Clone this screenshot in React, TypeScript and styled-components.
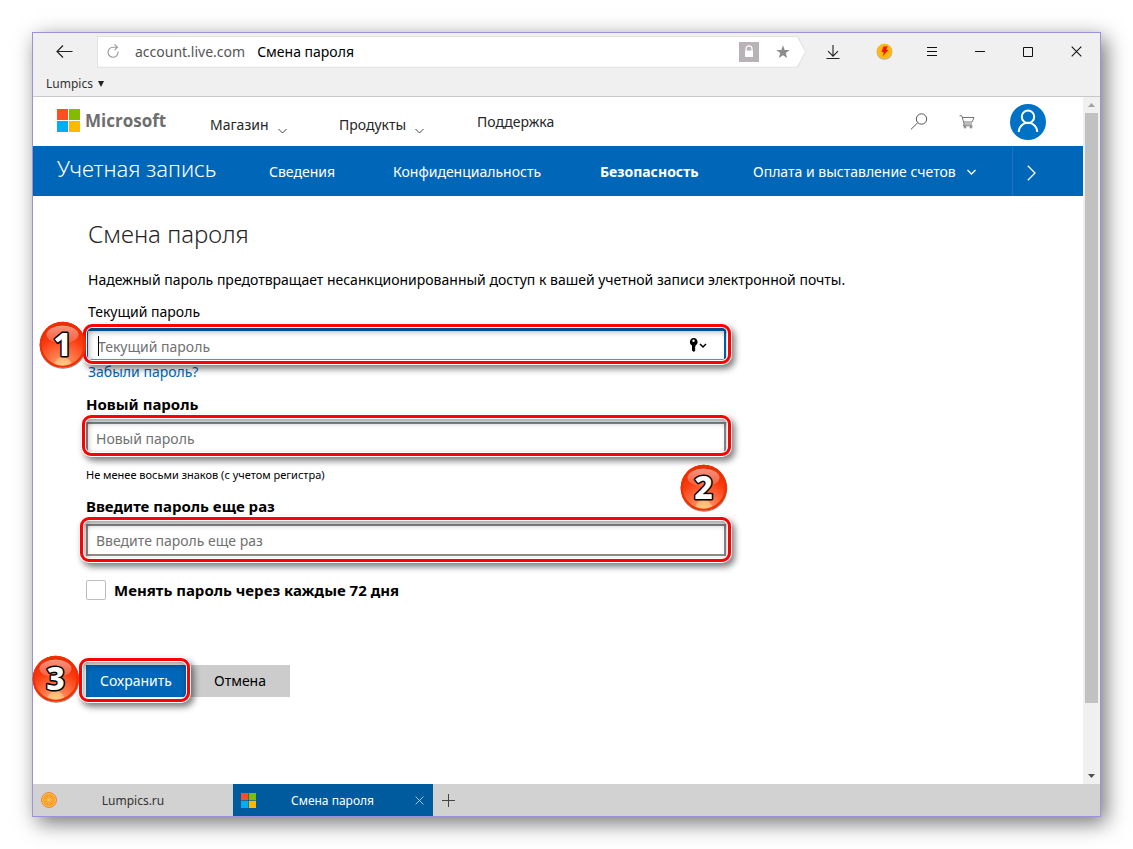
import React from "react";
import styled, { createGlobalStyle, css } from "styled-components";

const GlobalStyle = createGlobalStyle`
  *, *::before, *::after { box-sizing: border-box; }
  body {
    margin: 0;
    background: #fff;
    color: #000;
    font-family: "Noto Sans", "Open Sans", sans-serif;
    font-size: 14px;
    line-height: 24px;
  }
  button, input { font: inherit; color: inherit; margin: 0; }
  a { color: inherit; text-decoration: none; }
  h1, p { margin: 0; }
  svg { display: block; flex: none; }
`;

const BrowserWindow = styled.div`
  margin: 32px;
  min-height: calc(100vh - 64px);
  display: flex;
  flex-direction: column;
  border: 1px solid #9a93dc;
  background: #fff;
  box-shadow: 5px 6px 20px rgba(0, 0, 0, 0.55);
`;

/* ---------- browser chrome ---------- */

const Chrome = styled.header`
  height: 64px;
  display: flex;
  flex-direction: column;
  background: #f0f0f0;
  border-bottom: 1px solid #c8c8c8;
`;

const AddressRow = styled.div`
  display: flex;
  align-items: center;
  height: 38px;
`;

const ChromeButton = styled.button<{ $width?: number }>`
  width: ${(p) => p.$width ?? 48}px;
  height: 32px;
  padding: 0;
  border: 0;
  background: none;
  display: flex;
  align-items: center;
  justify-content: center;
`;

const arrowEnd = css`
  clip-path: polygon(0 0, calc(100% - 8px) 0, 100% 50%, calc(100% - 8px) 100%, 0 100%);
`;

const AddressFrame = styled.div`
  ${arrowEnd}
  flex: 1;
  height: 32px;
  padding: 1px;
  background: #e2e2e2;
`;

const AddressBar = styled.div`
  ${arrowEnd}
  height: 30px;
  padding: 0 14px 0 7px;
  display: flex;
  align-items: center;
  background: #fff;
`;

const AddressText = styled.div`
  flex: 1;
  display: flex;
  gap: 12px;
  padding-left: 14px;
  color: #000;
`;

const Host = styled.span`
  color: #555;
`;

const IconButton = styled.button<{ $size?: number; $fill?: string }>`
  width: ${(p) => p.$size ?? 16}px;
  height: ${(p) => p.$size ?? 16}px;
  padding: 0;
  border: 0;
  background: ${(p) => p.$fill ?? "none"};
  display: flex;
  align-items: center;
  justify-content: center;
`;

const AddressActions = styled.div`
  display: flex;
  align-items: center;
  gap: 16px;
`;

const BookmarkButton = styled.button`
  align-self: flex-start;
  display: flex;
  align-items: center;
  gap: 5px;
  height: 26px;
  padding: 1px 13px 0;
  border: 0;
  background: none;
  color: #333;
  font-size: 12px;
`;

/* ---------- page viewport ---------- */

const Viewport = styled.div`
  flex: 1;
  display: flex;
`;

const Page = styled.div`
  flex: 1;
  min-width: 0;
`;

const ScrollTrack = styled.div`
  width: 17px;
  padding: 0 2px;
  display: flex;
  flex-direction: column;
  align-items: center;
  background: #f0f0f0;
`;

const ScrollArrow = styled.div`
  height: 16px;
  display: flex;
  align-items: center;
`;

const ScrollThumb = styled.div`
  flex: 9;
  width: 13px;
  background: #c1c1c1;
`;

const ScrollRest = styled.div`
  flex: 1;
`;

const SiteHeader = styled.header`
  height: 49px;
  display: flex;
  align-items: center;
  padding: 0 37px 0 24px;
`;

const Brand = styled.a`
  display: flex;
  align-items: center;
  gap: 5px;
  width: 153px;
  padding-bottom: 2px;
  color: #6e6e6e;
  font-family: "Open Sans", sans-serif;
  font-size: 17px;
  font-weight: 700;
`;

const MenuButton = styled.button<{ $width: number }>`
  display: flex;
  align-items: flex-end;
  gap: 9px;
  width: ${(p) => p.$width}px;
  padding: 6px 0 0;
  border: 0;
  background: none;
  color: #262626;
`;

const Chevron = styled.span`
  padding-bottom: 3px;
`;

const HeaderLink = styled.a`
  color: #262626;
`;

const HeaderTools = styled.div`
  margin-left: auto;
  display: flex;
  align-items: center;
  gap: 32px;
`;

const ToolGroup = styled.div`
  display: flex;
  gap: 32px;
  padding-right: 3px;
`;

const Avatar = styled.button`
  width: 36px;
  height: 36px;
  padding: 0;
  border: 0;
  border-radius: 50%;
  background: #0072c6;
`;

const AccountNav = styled.nav`
  height: 50px;
  display: flex;
  align-items: center;
  padding-left: 24px;
  background: #0067b8;
  color: #fff;
`;

const AccountTitle = styled.a`
  width: 212px;
  padding-bottom: 6px;
  font-size: 22px;
  font-weight: 300;
`;

const NavLink = styled.a<{ $width: number; $active?: boolean }>`
  width: ${(p) => p.$width}px;
  padding-top: 2px;
  font-weight: ${(p) => (p.$active ? 700 : 400)};
  display: flex;
  align-items: center;
  gap: 11px;
  white-space: nowrap;
`;

const NavNext = styled.button`
  width: 71px;
  height: 50px;
  margin-left: auto;
  padding: 4px 0 0 14px;
  border: 0;
  border-left: 1px solid #2a6ebb;
  background: none;
`;

/* ---------- form ---------- */

const Form = styled.form`
  padding: 20px 53px 24px;
  display: flex;
  flex-direction: column;
  align-items: flex-start;
`;

const Title = styled.h1`
  padding-left: 2px;
  color: #262626;
  font-size: 24px;
  font-weight: 300;
  line-height: 36px;
`;

const Lead = styled.p`
  padding: 16px 2px 8px;
`;

const Label = styled.label<{ $strong?: boolean }>`
  padding-left: ${(p) => (p.$strong ? 0 : 2)}px;
  font-size: ${(p) => (p.$strong ? 15 : 14)}px;
  font-weight: ${(p) => (p.$strong ? 700 : 400)};
  margin-bottom: ${(p) => (p.$strong ? 6 : 4)}px;
`;

const Field = styled.div`
  position: relative;
  width: 100%;
  max-width: 640px;
`;

const PasswordInput = styled.input<{ $current?: boolean }>`
  display: block;
  width: 100%;
  height: 32px;
  padding: ${(p) => (p.$current ? "2px 10px 0" : "0 8px")};
  border: 2px solid ${(p) => (p.$current ? "#0067b8" : "#8c8c8c")};
  border-top-width: ${(p) => (p.$current ? 3 : 2)}px;
  background: #fff;
  outline: none;
  ${(p) => p.$current && css`border-bottom: 1px solid #5a9ad0;`}
  &::placeholder { color: #717171; opacity: 1; }
`;

const Caret = styled.span`
  position: absolute;
  left: 12px;
  top: 8px;
  width: 1px;
  height: 20px;
  background: #000;
`;

const KeyMenu = styled.button`
  position: absolute;
  right: 19px;
  top: 8px;
  display: flex;
  align-items: center;
  height: 18px;
  padding: 0;
  border: 0;
  background: none;
`;

const ForgotLink = styled.a`
  padding-left: 2px;
  margin-bottom: 8px;
  color: #0067b8;
`;

const Hint = styled.p`
  padding: 11px 0 9px;
  font-size: 11px;
  line-height: 20px;
`;

const CheckRow = styled.label`
  display: flex;
  align-items: center;
  gap: 8px;
  margin: 22px 0 63px;
  font-size: 15px;
  font-weight: 700;
`;

const Checkbox = styled.input`
  appearance: none;
  width: 20px;
  height: 20px;
  border: 1px solid #bdbdbd;
  border-radius: 2px;
  background: #fff;
`;

const Actions = styled.div`
  display: flex;
  gap: 4px;
`;

const ActionSlot = styled.div`
  position: relative;
`;

const ActionButton = styled.button<{ $primary?: boolean }>`
  width: 100px;
  height: 32px;
  padding: 0;
  border: 0;
  background: ${(p) => (p.$primary ? "#0067b8" : "#cccccc")};
  color: ${(p) => (p.$primary ? "#fff" : "#000")};
`;

/* ---------- annotations over the page ---------- */

const Highlight = styled.span<{ $outset: string }>`
  position: absolute;
  inset: ${(p) => p.$outset};
  border: 3px solid #ff0000;
  border-radius: 9px;
  pointer-events: none;
  box-shadow:
    0 0 0 1px #fff,
    3px 4px 6px 1px rgba(0, 0, 0, 0.5),
    inset 0 0 0 1px #fff,
    inset 1px 3px 6px 1px rgba(0, 0, 0, 0.4);
`;

const BadgeSpot = styled.span<{ $left?: number; $right?: number; $top: number }>`
  position: absolute;
  z-index: 1;
  top: ${(p) => p.$top}px;
  ${(p) => p.$left !== undefined && css`left: ${p.$left}px;`}
  ${(p) => p.$right !== undefined && css`right: ${p.$right}px;`}
`;

/* ---------- tab strip ---------- */

const TabStrip = styled.nav`
  height: 32px;
  display: flex;
  background: #d2d2d2;
`;

const Tab = styled.div<{ $active?: boolean }>`
  width: 200px;
  padding: 0 10px 0 8px;
  display: flex;
  align-items: center;
  font-size: 12px;
  background: ${(p) => (p.$active ? "#005a9e" : "transparent")};
  color: ${(p) => (p.$active ? "#fff" : "#333")};
`;

const TabTitle = styled.a`
  flex: 1;
  padding: 2px 6px 0 0;
  text-align: center;
`;

const TabSpacer = styled.span`
  width: 8px;
`;

/* ---------- icons ---------- */

const MicrosoftMark = ({ size }: { size: number }) => (
  <svg width={size} height={size} viewBox="0 0 23 23">
    <path fill="#ff4f22" d="M0 0h11v11H0z" />
    <path fill="#82bb00" d="M12 0h11v11H12z" />
    <path fill="#00aef2" d="M0 12h11v11H0z" />
    <path fill="#ffb800" d="M12 12h11v11H12z" />
  </svg>
);

const ChevronDown = ({ color, width = 1 }: { color: string; width?: number }) => (
  <svg width="9" height="6" viewBox="0 0 9 6" fill="none" stroke={color} strokeWidth={width}>
    <path d="M.5 1l4 4 4-4" />
  </svg>
);

const Badge = ({ value }: { value: number }) => {
  const id = `ball${value}`;
  return (
    <svg width="48" height="48" viewBox="0 0 48 48" role="img" aria-label={String(value)}>
      <defs>
        <radialGradient id={id} cx=".5" cy=".96" r=".9">
          <stop offset="0" stopColor="#ffcf85" />
          <stop offset=".2" stopColor="#ffb377" />
          <stop offset=".22" stopColor="#ff8656" />
          <stop offset=".48" stopColor="#ff5e30" />
          <stop offset=".7" stopColor="#fb3a10" />
          <stop offset="1" stopColor="#e92a00" />
        </radialGradient>
        <linearGradient id={`${id}g`} x1="0" y1="0" x2="0" y2="1">
          <stop offset="0" stopColor="#fff" stopOpacity=".5" />
          <stop offset="1" stopColor="#fff" stopOpacity=".15" />
        </linearGradient>
      </defs>
      <circle cx="24" cy="24.5" r="23.3" fill="#7d5148" opacity=".75" />
      <circle cx="23.7" cy="23.7" r="23" fill={`url(#${id})`} />
      <circle cx="23.7" cy="23.7" r="22" fill="none" stroke="#f03000" strokeWidth="2" />
      <ellipse cx="23.5" cy="13.5" rx="16" ry="9" fill={`url(#${id}g)`} />
      <text
        x="23.5"
        y="35"
        textAnchor="middle"
        fontFamily="Noto Sans, Open Sans, sans-serif"
        fontWeight="800"
        fontSize="32"
        fill="#fff"
        stroke="#000"
        strokeWidth="3"
        strokeLinejoin="round"
        paintOrder="stroke"
      >
        {value}
      </text>
    </svg>
  );
};

const BackIcon = () => (
  <svg width="18" height="14" viewBox="0 0 18 14" fill="none" stroke="#222" strokeWidth="1.2">
    <path d="M16.500 6.500H1M7 .5l-6 6 6 6" />
  </svg>
);

const ReloadIcon = () => (
  <svg width="13" height="15" viewBox="0 0 13 15" fill="none" stroke="#999" strokeWidth="1.1">
    <path d="M11 7.500a5 5 0 1 1-5-4.300H10.500M7.500.3l3 2.900-3 2.900" />
  </svg>
);

const LockIcon = () => (
  <svg width="10" height="13" viewBox="0 0 10 13">
    <path d="M2 6V3.800a3 3 0 0 1 6 0V6" fill="none" stroke="#fff" strokeWidth="1.2" />
    <path d="M1 5.500h8V12H1z" fill="#fff" />
  </svg>
);

const StarIcon = () => (
  <svg width="14" height="14" viewBox="0 0 14 14">
    <path fill="#8d8d8d" d="M7 .3l1.700 4.600 5 .2-3.900 3 1.400 4.900L7 10.200l-4.200 2.800 1.400-4.900L.3 5.100l5-.2z" />
  </svg>
);

const DownloadIcon = () => (
  <svg width="14" height="16" viewBox="0 0 14 16" fill="none" stroke="#222" strokeWidth="1.1">
    <path d="M7 1v11M2 7.200l5 5 5-5M.5 14.500h13" />
  </svg>
);

const BoltIcon = () => (
  <svg width="17" height="17" viewBox="0 0 17 17">
    <circle cx="8.500" cy="8.800" r="8" fill="#b9b0a0" />
    <circle cx="8.500" cy="8.200" r="7.500" fill="#ffbb0c" />
    <path fill="#f5160a" d="M7.500 3.500l4.300-.3-1.600 3.600 2.200.2-5.800 6.600 1.200-4.400-2.400-.2z" />
  </svg>
);

const MenuIcon = () => (
  <svg width="10" height="10" viewBox="0 0 10 10" stroke="#111">
    <path d="M0 .5h10M0 4.500h10M0 8.500h10" />
  </svg>
);

const MinimizeIcon = () => (
  <svg width="10" height="10" viewBox="0 0 10 10" stroke="#111">
    <path d="M0 4.500h10" />
  </svg>
);

const MaximizeIcon = () => (
  <svg width="10" height="10" viewBox="0 0 10 10" fill="none" stroke="#111">
    <path d="M.5.5h9v9h-9z" />
  </svg>
);

const CloseIcon = ({ color = "#111", size = 11 }: { color?: string; size?: number }) => (
  <svg width={size} height={size} viewBox="0 0 11 11" stroke={color} strokeWidth="1.100">
    <path d="M.7.7l9.600 9.600M10.300.7L.7 10.300" />
  </svg>
);

const SearchIcon = () => (
  <svg width="18" height="17" viewBox="0 0 18 17" fill="none" stroke="#555">
    <circle cx="11.500" cy="6" r="5.200" />
    <path d="M7.800 9.700L1 16.300" />
  </svg>
);

const CartIcon = () => (
  <svg width="16" height="14" viewBox="0 0 16 14" fill="none" stroke="#666" strokeWidth=".9">
    <path d="M.5.800h2.300l2.400 8.200h7.800M3.300 2.500h11.700l-1.900 4.500H4.800M5.200 9l-.8 1.800h9" />
    <circle cx="6" cy="12.200" r=".9" />
    <circle cx="12" cy="12.200" r=".9" />
  </svg>
);

const PersonIcon = () => (
  <svg width="36" height="36" viewBox="0 0 36 36" fill="none" stroke="#fff" strokeWidth="2">
    <circle cx="18" cy="12.800" r="6.200" />
    <path d="M8.700 28a9.300 9.300 0 0 1 18.600 0" />
  </svg>
);

const NextIcon = () => (
  <svg width="9" height="16" viewBox="0 0 9 16" fill="none" stroke="#fff" strokeWidth="1.300">
    <path d="M.8.800L8 8 .8 15.200" />
  </svg>
);

const KeyIcon = () => (
  <svg width="18" height="14" viewBox="0 0 18 14">
    <path
      fill="#000"
      fillRule="evenodd"
      d="M4.500 0a4 4 0 0 1 2 7.500v1l-.8.800.8.900-.8 1 .8.900-1.500 1.900-2-1.500v-5A4 4 0 0 1 4.500 0zm0 1.500a1.200 1.200 0 1 0 0 2.400 1.200 1.200 0 0 0 0-2.400z"
    />
    <path d="M11 6l3 3 3-3" fill="none" stroke="#000" strokeWidth="1.500" />
  </svg>
);

const OrangeIcon = () => (
  <svg width="16" height="16" viewBox="0 0 16 16">
    <circle cx="8" cy="8" r="7.500" fill="#ffc04a" stroke="#ee7a3a" strokeWidth=".9" />
    <circle cx="8" cy="8" r="6" fill="#f79c1c" />
    <path
      stroke="#fbc468"
      strokeWidth=".8"
      d="M8 2.500v11M2.500 8h11M4.100 4.100l7.800 7.800M11.900 4.100l-7.800 7.800"
    />
  </svg>
);

const TriangleIcon = ({ color, up }: { color: string; up?: boolean }) => (
  <svg width="7" height="4" viewBox="0 0 7 4">
    <path fill={color} d={up ? "M0 4h7L3.500 0z" : "M0 0h7L3.500 4z"} />
  </svg>
);

const BookmarkArrow = () => (
  <svg width="6" height="6" viewBox="0 0 6 6">
    <path fill="#222" d="M0 0h6L3 6z" />
  </svg>
);

const PlusIcon = () => (
  <svg width="13" height="13" viewBox="0 0 13 13" stroke="#444">
    <path d="M6.500 0v13M0 6.500h13" />
  </svg>
);

/* ---------- page ---------- */

export default function App() {
  return (
    <>
      <GlobalStyle />
      <BrowserWindow>
        <Chrome>
          <AddressRow>
            <ChromeButton $width={64} aria-label="Назад"><BackIcon /></ChromeButton>
            <AddressFrame>
              <AddressBar>
                <IconButton aria-label="Обновить"><ReloadIcon /></IconButton>
                <AddressText>
                  <Host>account.live.com</Host>
                  <span>Смена пароля</span>
                </AddressText>
                <AddressActions>
                  <IconButton $size={20} $fill="#b9b2b6" aria-label="Защищено"><LockIcon /></IconButton>
                  <IconButton aria-label="В закладки"><StarIcon /></IconButton>
                </AddressActions>
              </AddressBar>
            </AddressFrame>
            <ChromeButton $width={54} aria-label="Загрузки"><DownloadIcon /></ChromeButton>
            <ChromeButton aria-label="Турбо"><BoltIcon /></ChromeButton>
            <ChromeButton aria-label="Меню"><MenuIcon /></ChromeButton>
            <ChromeButton aria-label="Свернуть"><MinimizeIcon /></ChromeButton>
            <ChromeButton aria-label="Развернуть"><MaximizeIcon /></ChromeButton>
            <ChromeButton aria-label="Закрыть"><CloseIcon /></ChromeButton>
          </AddressRow>
          <BookmarkButton>
            Lumpics
            <BookmarkArrow />
          </BookmarkButton>
        </Chrome>

        <Viewport>
          <Page>
            <SiteHeader>
              <Brand href="#home">
                <MicrosoftMark size={23} />
                Microsoft
              </Brand>
              <MenuButton $width={129}>
                Магазин
                <Chevron><ChevronDown color="#444" /></Chevron>
              </MenuButton>
              <MenuButton $width={138}>
                Продукты
                <Chevron><ChevronDown color="#444" /></Chevron>
              </MenuButton>
              <HeaderLink href="#support">Поддержка</HeaderLink>
              <HeaderTools>
                <ToolGroup>
                  <IconButton aria-label="Поиск"><SearchIcon /></IconButton>
                  <IconButton aria-label="Корзина"><CartIcon /></IconButton>
                </ToolGroup>
                <Avatar aria-label="Профиль"><PersonIcon /></Avatar>
              </HeaderTools>
            </SiteHeader>

            <AccountNav>
              <AccountTitle href="#account">Учетная запись</AccountTitle>
              <NavLink href="#info" $width={124}>Сведения</NavLink>
              <NavLink href="#privacy" $width={207}>Конфиденциальность</NavLink>
              <NavLink href="#security" $width={153} $active>Безопасность</NavLink>
              <NavLink href="#billing" $width={225}>
                Оплата и выставление счетов
                <ChevronDown color="#fff" width={1.3} />
              </NavLink>
              <NavNext aria-label="Далее"><NextIcon /></NavNext>
            </AccountNav>

            <Form onSubmit={(e) => e.preventDefault()}>
              <Title>Смена пароля</Title>
              <Lead>
                Надежный пароль предотвращает несанкционированный доступ к вашей учетной записи электронной почты.
              </Lead>

              <Label htmlFor="current">Текущий пароль</Label>
              <Field>
                <PasswordInput id="current" type="password" placeholder="Текущий пароль" $current />
                <Caret />
                <KeyMenu type="button" aria-label="Сохранённые пароли"><KeyIcon /></KeyMenu>
                <Highlight $outset="-4px -5px -4px -3px" />
                <BadgeSpot $left={-47} $top={-7}><Badge value={1} /></BadgeSpot>
              </Field>
              <ForgotLink href="#forgot">Забыли пароль?</ForgotLink>

              <Label htmlFor="new" $strong>Новый пароль</Label>
              <Field>
                <PasswordInput id="new" type="password" placeholder="Новый пароль" />
                <Highlight $outset="-7px -5px -2px -4px" />
                <BadgeSpot $right={-2} $top={42}><Badge value={2} /></BadgeSpot>
              </Field>
              <Hint>Не менее восьми знаков (с учетом регистра)</Hint>

              <Label htmlFor="repeat" $strong>Введите пароль еще раз</Label>
              <Field>
                <PasswordInput id="repeat" type="password" placeholder="Введите пароль еще раз" />
                <Highlight $outset="-7px -5px -6px -6px" />
              </Field>

              <CheckRow>
                <Checkbox type="checkbox" />
                Менять пароль через каждые 72 дня
              </CheckRow>

              <Actions>
                <ActionSlot>
                  <ActionButton type="submit" $primary>Сохранить</ActionButton>
                  <Highlight $outset="-7px -4px -5px -7px" />
                  <BadgeSpot $left={-54} $top={-10}><Badge value={3} /></BadgeSpot>
                </ActionSlot>
                <ActionButton type="button">Отмена</ActionButton>
              </Actions>
            </Form>
          </Page>
          <ScrollTrack>
            <ScrollArrow><TriangleIcon color="#a3a3a3" up /></ScrollArrow>
            <ScrollThumb />
            <ScrollRest />
            <ScrollArrow><TriangleIcon color="#505050" /></ScrollArrow>
          </ScrollTrack>
        </Viewport>

        <TabStrip>
          <Tab>
            <OrangeIcon />
            <TabTitle href="#lumpics">Lumpics.ru</TabTitle>
            <TabSpacer />
          </Tab>
          <Tab $active>
            <MicrosoftMark size={15} />
            <TabTitle href="#password">Смена пароля</TabTitle>
            <IconButton $size={8} aria-label="Закрыть вкладку"><CloseIcon color="#b7d4ee" size={9} /></IconButton>
          </Tab>
          <ChromeButton $width={31} aria-label="Новая вкладка"><PlusIcon /></ChromeButton>
        </TabStrip>
      </BrowserWindow>
    </>
  );
}
